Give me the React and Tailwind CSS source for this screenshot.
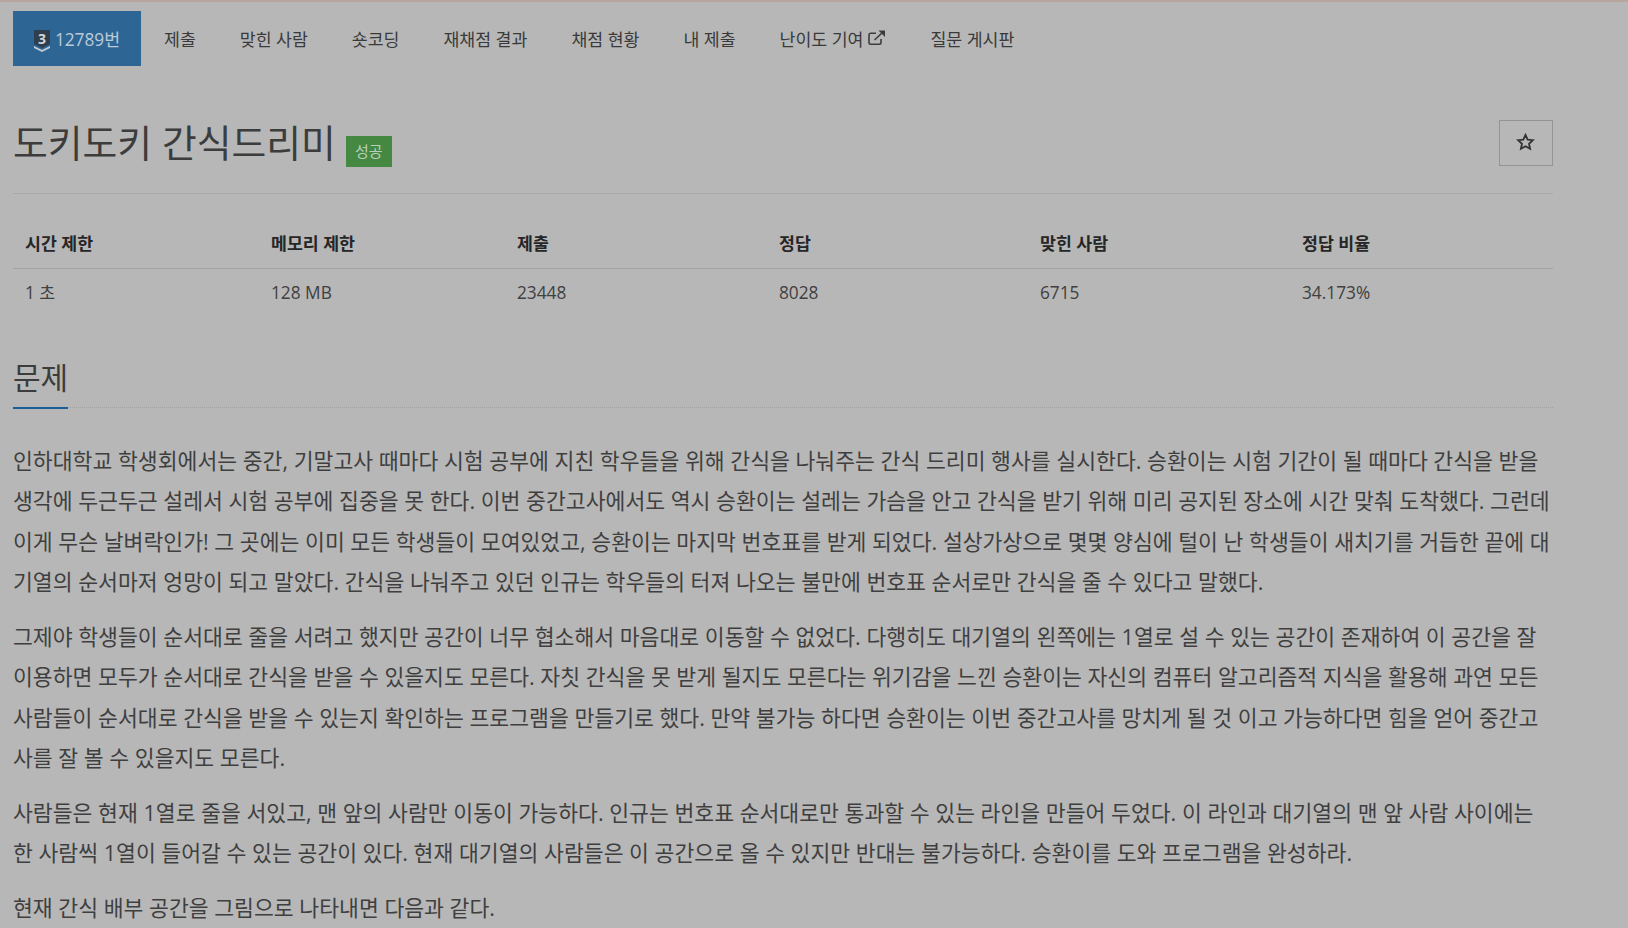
const FONT = '"Open Sans","Noto Sans CJK KR",sans-serif';

const tabs = ["제출", "맞힌 사람", "숏코딩", "재채점 결과", "채점 현황", "내 제출"];
const heads = ["시간 제한", "메모리 제한", "제출", "정답", "맞힌 사람", "정답 비율"];
const vals = ["1 초", "128 MB", "23448", "8028", "6715", "34.173%"];
const widths = ["w-[246px]", "w-[246px]", "w-[262px]", "w-[261px]", "w-[262px]", "flex-1"];

const paras = [
  "인하대학교 학생회에서는 중간, 기말고사 때마다 시험 공부에 지친 학우들을 위해 간식을 나눠주는 간식 드리미 행사를 실시한다. 승환이는 시험 기간이 될 때마다 간식을 받을 생각에 두근두근 설레서 시험 공부에 집중을 못 한다. 이번 중간고사에서도 역시 승환이는 설레는 가슴을 안고 간식을 받기 위해 미리 공지된 장소에 시간 맞춰 도착했다. 그런데 이게 무슨 날벼락인가! 그 곳에는 이미 모든 학생들이 모여있었고, 승환이는 마지막 번호표를 받게 되었다. 설상가상으로 몇몇 양심에 털이 난 학생들이 새치기를 거듭한 끝에 대기열의 순서마저 엉망이 되고 말았다. 간식을 나눠주고 있던 인규는 학우들의 터져 나오는 불만에 번호표 순서로만 간식을 줄 수 있다고 말했다.",
  "그제야 학생들이 순서대로 줄을 서려고 했지만 공간이 너무 협소해서 마음대로 이동할 수 없었다. 다행히도 대기열의 왼쪽에는 1열로 설 수 있는 공간이 존재하여 이 공간을 잘 이용하면 모두가 순서대로 간식을 받을 수 있을지도 모른다. 자칫 간식을 못 받게 될지도 모른다는 위기감을 느낀 승환이는 자신의 컴퓨터 알고리즘적 지식을 활용해 과연 모든 사람들이 순서대로 간식을 받을 수 있는지 확인하는 프로그램을 만들기로 했다. 만약 불가능 하다면 승환이는 이번 중간고사를 망치게 될 것 이고 가능하다면 힘을 얻어 중간고사를 잘 볼 수 있을지도 모른다.",
  "사람들은 현재 1열로 줄을 서있고, 맨 앞의 사람만 이동이 가능하다. 인규는 번호표 순서대로만 통과할 수 있는 라인을 만들어 두었다. 이 라인과 대기열의 맨 앞 사람 사이에는 한 사람씩 1열이 들어갈 수 있는 공간이 있다. 현재 대기열의 사람들은 이 공간으로 올 수 있지만 반대는 불가능하다. 승환이를 도와 프로그램을 완성하라.",
  "현재 간식 배부 공간을 그림으로 나타내면 다음과 같다.",
];

function Tier() {
  return (
    <svg width="16" height="22" viewBox="0 0 16 22" className="shrink-0 mt-[2px]">
      <path d="M0 0H16V14L8 18L0 14Z" fill="#2f3f50" />
      <path d="M0 16L8 20L16 16V18L8 22L0 18Z" fill="#c3ccd4" />
      <text x="8" y="13.5" textAnchor="middle" fontSize="14" fontWeight="700" fill="#d5d5d5" fontFamily="Open Sans">3</text>
    </svg>
  );
}

function External() {
  return (
    <svg width="18" height="17" viewBox="0 0 18 16" fill="none" stroke="#3c3c3c" strokeWidth="1.6" className="ml-[5px] -mt-[3px]">
      <path d="M13 9.5V13.2A1.6 1.6 0 0 1 11.4 14.8H2.6A1.6 1.6 0 0 1 1 13.2V5.4A1.6 1.6 0 0 1 2.6 3.8H8" />
      <path d="M6.5 10.5L15.5 2" />
      <path d="M10.5 1H17V7.5Z" fill="#3c3c3c" stroke="none" />
    </svg>
  );
}

export default function App() {
  return (
    <div className="h-[928px] overflow-hidden bg-[#b7b7b7] text-[#3a3a3a]" style={{ fontFamily: FONT }}>
      <div className="h-0.5 bg-[#b8a69e]" />
      <div className="w-[1540px] ml-[13px]">
        <nav className="flex items-center mt-[9px] h-[55px] text-[17.28px]">
          <div className="flex items-center justify-center gap-[5px] w-[128px] h-full bg-[#2d6595] text-[#bccbd8] pt-[2px]">
            <Tier />
            <span>12789번</span>
          </div>
          <div className="flex items-center pt-[2px] ml-[1px]">
            {tabs.map((t) => (
              <div key={t} className="px-[22px]">{t}</div>
            ))}
            <div className="px-[22px] flex items-center">난이도 기여<External /></div>
            <div className="px-[22px]">질문 게시판</div>
          </div>
        </nav>

        <div className="flex items-start justify-between mt-[54px] h-[74px] border-b border-[#a9a9a9]">
          <div className="flex items-end">
            <h1 className="text-[37.8px] leading-[45px] text-[#3c3c3c] font-normal">도키도키 간식드리미</h1>
            <span className="ml-[10px] mb-[-2px] w-[46px] h-[31px] flex items-center justify-center bg-[#458842] text-[#b9d0b8] text-[15px]">성공</span>
          </div>
          <button className="w-[54px] h-[46px] border border-[#949494] flex items-center justify-center pb-[3px] pr-[2px]">
            <svg width="19" height="18" viewBox="0 0 24 24" fill="none" stroke="#333" strokeWidth="2.4"><path d="M12 2.5l2.9 6.3 6.9.8-5.1 4.7 1.4 6.8-6.1-3.4-6.1 3.4 1.4-6.8-5.1-4.7 6.9-.8z" /></svg>
          </button>
        </div>

        <div className="mt-[25px] text-[17.28px]">
          <div className="flex h-[50px] items-center border-b border-[#a3a3a3] font-bold text-[#262626]">
            {heads.map((h, i) => <div key={h} className={`${widths[i]} pl-3`}>{h}</div>)}
          </div>
          <div className="flex h-[47px] items-center text-[#404040]">
            {vals.map((v, i) => <div key={v} className={`${widths[i]} pl-3`}>{v}</div>)}
          </div>
        </div>

        <div className="mt-[31px] h-[61px] border-b border-dotted border-[#a3a3a3] flex">
          <h2 className="text-[30px] font-normal leading-[40px] text-[#3c3c3c] border-b-2 border-[#1b5e96] -mb-px h-[62px] flex items-center pt-[2px]">문제</h2>
        </div>

        <div className="mt-[32.5px] text-[21.6px] leading-[40.5px] text-[#3f3f3f]">
          {paras.map((p) => <p key={p} className="mb-[14px]">{p}</p>)}
        </div>
      </div>
    </div>
  );
}
